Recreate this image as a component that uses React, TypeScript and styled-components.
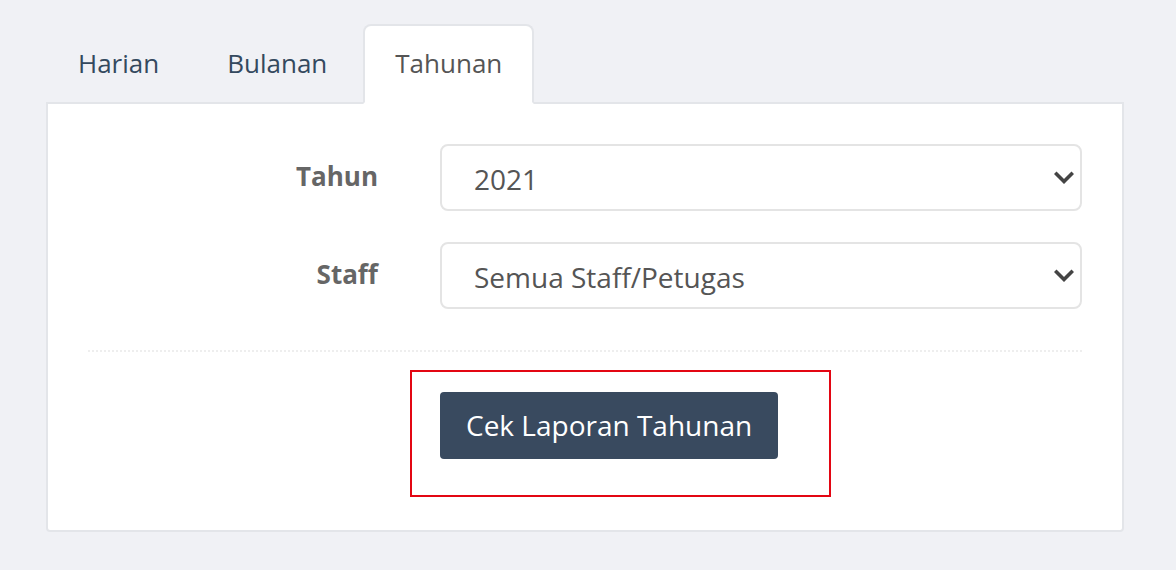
import React from "react";
import styled, { createGlobalStyle } from "styled-components";

const Global = createGlobalStyle`
  html, body { margin: 0; padding: 0; background: #f0f1f5; }
  body { font-family: "Open Sans", "Noto Sans", sans-serif; }
  * { box-sizing: border-box; }
`;

const Page = styled.div`
  width: 1176px;
  height: 570px;
  padding: 24px 52px 0 46px;
`;

const Tabs = styled.ul`
  display: flex;
  list-style: none;
  margin: 0;
  padding: 0;
  position: relative;
  z-index: 1;
`;

const Tab = styled.li<{ $active?: boolean }>`
  margin-right: 4px;
  margin-bottom: -2px;
  padding: 0 30px 2px;
  height: 80px;
  display: flex;
  align-items: center;
  font-size: 26px;
  color: ${(p) => (p.$active ? "#555555" : "#34495e")};
  background: ${(p) => (p.$active ? "#ffffff" : "transparent")};
  border: 2px solid ${(p) => (p.$active ? "#e3e5e9" : "transparent")};
  border-bottom-color: ${(p) => (p.$active ? "#ffffff" : "transparent")};
  border-radius: 8px 8px 0 0;
`;

const Panel = styled.div`
  background: #ffffff;
  border: 2px solid #e3e5e9;
  border-radius: 0 0 4px 4px;
  padding: 40px 40px 71px;
`;

const FormRow = styled.div`
  display: grid;
  grid-template-columns: 290px 1fr;
  column-gap: 62px;
  align-items: center;
  margin-bottom: 31px;
`;

const Label = styled.label`
  text-align: right;
  font-size: 26px;
  font-weight: 700;
  color: #666666;
  padding-bottom: 4px;
`;

const SelectWrap = styled.div`
  position: relative;
`;

const Select = styled.select`
  appearance: none;
  -webkit-appearance: none;
  width: 100%;
  height: 67px;
  border: 2px solid #e4e4e4;
  border-radius: 8px;
  background: #ffffff;
  padding: 2px 60px 0 32px;
  font-family: "Open Sans", "Noto Sans", sans-serif;
  font-size: 28px;
  color: #555555;
  outline: none;
`;

const Chevron = styled.svg`
  position: absolute;
  right: 8px;
  top: 50%;
  transform: translateY(-50%);
  width: 20px;
  height: 14px;
  pointer-events: none;
`;

const Divider = styled.hr`
  border: 0;
  border-top: 2px dotted #eeeeee;
  margin: 41px 0 40px;
`;

const ActionRow = styled.div`
  display: grid;
  grid-template-columns: 290px 1fr;
  column-gap: 62px;
`;

const Highlight = styled.div`
  position: relative;
  justify-self: start;
`;

const Frame = styled.div`
  position: absolute;
  top: -22px;
  left: -30px;
  right: -53px;
  bottom: -38px;
  border: 2px solid #e30613;
  pointer-events: none;
`;

const Button = styled.button`
  height: 67px;
  padding: 0 26px 2px;
  background: #394a5f;
  color: #ffffff;
  border: 0;
  border-radius: 4px;
  font-family: "Open Sans", "Noto Sans", sans-serif;
  font-size: 28px;
  cursor: pointer;
`;

const ChevronIcon = () => (
  <Chevron viewBox="0 0 20 14">
    <path d="M2.5 3 L10 10.5 L17.5 3" fill="none" stroke="#444444" strokeWidth="3.6" strokeLinecap="square" />
  </Chevron>
);

export default function App() {
  return (
    <Page>
      <Global />
      <Tabs>
        <Tab>Harian</Tab>
        <Tab>Bulanan</Tab>
        <Tab $active>Tahunan</Tab>
      </Tabs>
      <Panel>
        <FormRow>
          <Label>Tahun</Label>
          <SelectWrap>
            <Select defaultValue="2021">
              <option value="2021">2021</option>
            </Select>
            <ChevronIcon />
          </SelectWrap>
        </FormRow>
        <FormRow>
          <Label>Staff</Label>
          <SelectWrap>
            <Select defaultValue="all">
              <option value="all">Semua Staff/Petugas</option>
            </Select>
            <ChevronIcon />
          </SelectWrap>
        </FormRow>
        <Divider />
        <ActionRow>
          <span />
          <Highlight>
            <Button>Cek Laporan Tahunan</Button>
            <Frame />
          </Highlight>
        </ActionRow>
      </Panel>
    </Page>
  );
}
